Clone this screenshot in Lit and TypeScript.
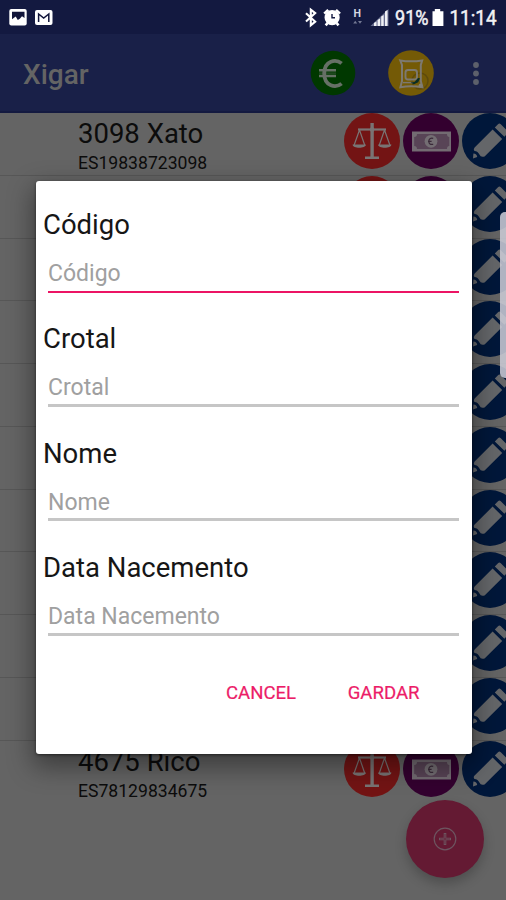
import { LitElement, html, css, svg } from "lit";
import { customElement } from "lit/decorators.js";

interface Animal { name: string; tag: string }

const animals: Animal[] = [
  { name: "3098 Xato", tag: "ES19838723098" },
  ...Array.from({ length: 9 }, () => ({ name: "", tag: "" })),
  { name: "4675 Rico", tag: "ES78129834675" },
];

const scales = html`<svg class="disc" viewBox="0 0 56 56">
  <circle cx="28" cy="28" r="28" fill="#731414" />
  <g fill="none" stroke="#797474" stroke-width="1.7">
    <path d="M14 16.5H42" stroke-width="2.2" />
    <path d="M15.5 17L9.8 33M15.5 17L21 33M40.5 17L35 33M40.5 17L46.2 33" stroke-width="1.2" />
  </g>
  <g fill="#797474">
    <path d="M26.4 10h3.4v34h-3.4zM21 43.5h14v2.5H21z" />
    <path d="M8.6 31.5h13.2c0 4.4-13.2 4.4-13.2 0zM34.2 31.5h13.2c0 4.4-13.2 4.4-13.2 0z" />
    <circle cx="28.1" cy="16.6" r="2.3" />
  </g>
</svg>`;

const banknote = html`<svg class="disc" viewBox="0 0 56 56">
  <circle cx="28" cy="28" r="28" fill="#33002f" />
  <rect x="9" y="18.5" width="39" height="20" fill="#736b72" />
  <path d="M14 21H44Q44 24 46.3 24V33Q44 33 44 36H14Q14 33 11.2 33V24Q14 24 14 21Z" fill="#584456" />
  <circle cx="28" cy="28.3" r="6.4" fill="#746e73" />
  <path d="M30.2 25.3q-4.3-.8-4.4 3q.1 3.8 4.4 3M25 28.3h3.6" fill="none" stroke="#3a2a39" stroke-width="1.2" />
</svg>`;

const pencil = html`<svg class="disc" viewBox="0 0 56 56">
  <circle cx="28" cy="28" r="28" fill="#00173a" />
  <g fill="#646669">
    <path d="M30.6 16.6L40.2 26L22.6 43.4Q18.8 44.8 17.4 41.6Q16 38.4 12.4 38Q11 36.2 12.6 34.6Z" />
    <path d="M32.8 14.4L36 11.2Q37.4 9.8 38.8 11.2L45.4 17.8Q46.8 19.2 45.4 20.6L42.4 23.8Z" />
    <path d="M11.4 40.4Q14.8 40.6 15.2 44L11 45.4Z" />
  </g>
</svg>`;

@customElement("status-bar")
export class StatusBar extends LitElement {
  static styles = css`
    :host { display: block; height: 34px; background: #131940; }
    .bar { display: block; width: 100%; height: 34px; }
    .txt { font-family: Roboto, sans-serif; font-size: 21px; fill: #f2f2f5; stroke: #f2f2f5; stroke-width: 0.5; }
    .tiny { font: bold 10px Roboto, sans-serif; fill: #d5d6e0; }
  `;
  render() {
    return html`<svg class="bar" viewBox="0 0 506 34">
      <rect x="9.3" y="9" width="17.4" height="16.6" rx="2" fill="#fff" />
      <path d="M12 11.8H24.5V18L22 16.3L19.8 18.8L17.8 20L15.7 16.5L12 19.2Z" fill="#11153a" />
      <rect x="35" y="10" width="17.5" height="15" rx="2" fill="#fff" />
      <path d="M38.6 22V14L43.7 18L48.8 14V22" fill="none" stroke="#11153a" stroke-width="1.5" />
      <path d="M306 13.3L315.2 21.6L310.8 25.3V9.6L315.2 13.1L306 21.5" fill="none" stroke="#fff" stroke-width="2.1" />
      <g fill="none" stroke="#fff">
        <circle cx="332.1" cy="17.6" r="5.6" stroke-width="4" fill="#fff" />
        <path d="M324.2 13.6L328.2 9.9M336 9.9L340 13.6M327.6 23L325.7 25.4M336.6 23L338.5 25.4" stroke-width="2.6" />
        <path d="M332 14V17.8H335" stroke="#131940" stroke-width="1.4" />
      </g>
      <text class="tiny" x="353.5" y="17.2" textLength="7.5" lengthAdjust="spacingAndGlyphs">H</text>
      <path d="M353.2 23.4l2-2.6 2 2.6zM358 21h4l-2 2.8z" fill="#747993" />
      <path d="M370.5 26L388.5 9V26Z" fill="#686d8e" />
      ${[[374, 4.5], [377.6, 7.5], [381.2, 11], [385, 16]].map(([x, h]) => svg`<path d="M${x} ${26 - h + 1.5}L${x + 2.5} ${26 - h}V26H${x}Z" fill="#eff0f4" />`)}
      <text class="txt" x="395" y="25" textLength="33.5" lengthAdjust="spacingAndGlyphs">91%</text>
      <path d="M432.5 11.2h2.3V9h5.4v2.2h3.2V26h-10.9z" fill="#fff" />
      <text class="txt" x="449.5" y="25" textLength="47" lengthAdjust="spacingAndGlyphs">11:14</text>
    </svg>`;
  }
}

@customElement("app-toolbar")
export class AppToolbar extends LitElement {
  static styles = css`
    :host { display: flex; align-items: center; height: 79px; box-sizing: border-box; padding: 1px 26px 0 23px; background: #192048; border-bottom: 2px solid #141a40; }
    .title { flex: 1; margin: 2px 0 0; font: 500 28px Roboto, sans-serif; color: #646464; }
    .round { width: 46px; height: 46px; }
    .euro { margin-right: 32px; }
    .feed { margin-right: 38px; }
    .more { width: 8px; height: 26px; }
  `;
  render() {
    return html`
      <h1 class="title">Xigar</h1>
      <svg class="round euro" viewBox="0 0 46 46">
        <circle cx="23" cy="23" r="22.3" fill="#003800" />
        <path d="M31.6 13.4C26 8.8 14.4 10 14.2 23.5C14.4 37 26 38.2 31.6 33.6" fill="none" stroke="#667066" stroke-width="3.8" />
        <path d="M9 20.3H26M9 26H26" stroke="#667066" stroke-width="2.4" /><path d="M9 23.1H26" stroke="#667066" stroke-width="1" opacity=".5" />
      </svg>
      <svg class="round feed" viewBox="0 0 46 46">
        <circle cx="23" cy="23" r="22.8" fill="#745a06" />
        <circle cx="32" cy="31" r="8" fill="none" stroke="#5d4a0c" stroke-width="1.5" />
        <g fill="none" stroke="#7d7970">
          <path d="M12.2 10.4Q23 12.2 34.2 10.4L32.8 15V31L34.4 37.2Q23 35.4 12.4 37.2L14 31V15Z" stroke-width="2" />
          <rect x="17.5" y="20" width="11.5" height="9.5" rx="2.5" stroke-width="1.9" />
          <path d="M15 32.6H25" stroke-width="1.4" />
        </g>
        <path d="M22.5 32.5l4-.5 3.5-4 2 .2-1.8 4-4.2 2z" fill="#082d25" />
        <circle cx="32.6" cy="35.5" r="2" fill="#817d73" />
      </svg>
      <svg class="more" viewBox="0 0 8 26" fill="#5d606b">
        <circle cx="4" cy="5" r="2.9" /><circle cx="4" cy="13.5" r="2.9" /><circle cx="4" cy="22" r="2.9" />
      </svg>`;
  }
}

@customElement("animal-row")
export class AnimalRow extends LitElement {
  static properties = { animal: { attribute: false } };
  declare animal: Animal;
  static styles = css`
    :host { display: flex; box-sizing: border-box; height: 62.78px; border-bottom: 1px solid #575757; padding-left: 78px; font-family: Roboto, sans-serif; color: #0c0c0c; }
    :host(:last-of-type) { border-bottom-color: transparent; }
    .info { width: 266px; flex: none; }
    .name { height: 40px; font-size: 27.5px; line-height: 41px; }
    .tag { font-size: 17.6px; line-height: 20px; }
    .actions { display: flex; flex: none; gap: 3px; }
    .disc { display: block; width: 56px; height: 56px; flex: none; }
  `;
  render() {
    return html`
      <div class="info"><div class="name">${this.animal.name}</div><div class="tag">${this.animal.tag}</div></div>
      <div class="actions">${scales}${banknote}${pencil}</div>`;
  }
}

@customElement("form-dialog")
export class FormDialog extends LitElement {
  static styles = css`
    :host { display: block; box-sizing: border-box; width: 436px; height: 573px; padding: 22px 8px 0 7.5px; background: #fff; border-radius: 3px; box-shadow: 0 10px 26px 3px rgba(0, 0, 0, 0.4), 0 1px 3px rgba(0, 0, 0, 0.5); font-family: Roboto, sans-serif; }
    .field { display: block; height: 114.4px; }
    .label { display: block; height: 47px; font-size: 27.5px; line-height: 44px; color: #161616; }
    .input { display: block; box-sizing: border-box; width: 411px; height: 42.5px; margin: 0 0 0 5px; padding: 7px 0 0; border: 0; border-bottom: 3px solid #c6c6c6; border-radius: 0; background: none; outline: 0; font: 23px Roboto, sans-serif; }
    .input::placeholder { color: #a0a0a0; opacity: 1; }
    .active { border-bottom: 2px solid #ec1464; }
    .buttons { display: flex; justify-content: flex-end; gap: 51.5px; padding: 16px 43px 0 0; }
    .button { padding: 0; border: 0; background: none; font: 400 18.6px/32px Roboto, sans-serif; color: #ec1c68; -webkit-text-stroke: 0.2px #ec1c68; transform: translateX(-1px); }
  `;
  render() {
    return html`
      ${["Código", "Crotal", "Nome", "Data Nacemento"].map((f, i) => html`
        <label class="field"><span class="label">${f}</span><input class="input ${i === 0 ? "active" : ""}" placeholder=${f} /></label>`)}
      <div class="buttons"><button class="button">CANCEL</button><button class="button">GARDAR</button></div>`;
  }
}

@customElement("app-root")
export class AppRoot extends LitElement {
  static styles = css`
    :host { display: block; position: relative; width: 506px; height: 900px; overflow: hidden; background: #646464; }
    .dialog { position: absolute; left: 35.5px; top: 181px; }
    .handle { position: absolute; left: 500px; top: 212px; width: 12px; height: 166px; border-radius: 5px; background: rgba(205, 205, 215, 0.86); }
    .fab { position: absolute; left: 405.5px; top: 799.5px; width: 78.5px; height: 78.5px; padding: 0; border: 0; border-radius: 50%; background: #641a33; box-shadow: 0 6px 12px rgba(0, 0, 0, 0.22); }
    .plus { display: block; width: 24px; height: 24px; margin: auto; }
  `;
  render() {
    return html`
      <status-bar></status-bar>
      <app-toolbar></app-toolbar>
      ${animals.map((a) => html`<animal-row .animal=${a}></animal-row>`)}
      <button class="fab" aria-label="Add">
        <svg class="plus" viewBox="0 0 24 24" fill="none" stroke="#6d5560" stroke-width="1.2">
          <circle cx="12" cy="12" r="10.8" /><path d="M12 6V18M6 12H18" stroke-width="2.6" /><path d="M12 7V17M7 12H17" stroke="#661a34" stroke-width=".7" />
        </svg>
      </button>
      <form-dialog class="dialog"></form-dialog>
      <div class="handle"></div>`;
  }
}
